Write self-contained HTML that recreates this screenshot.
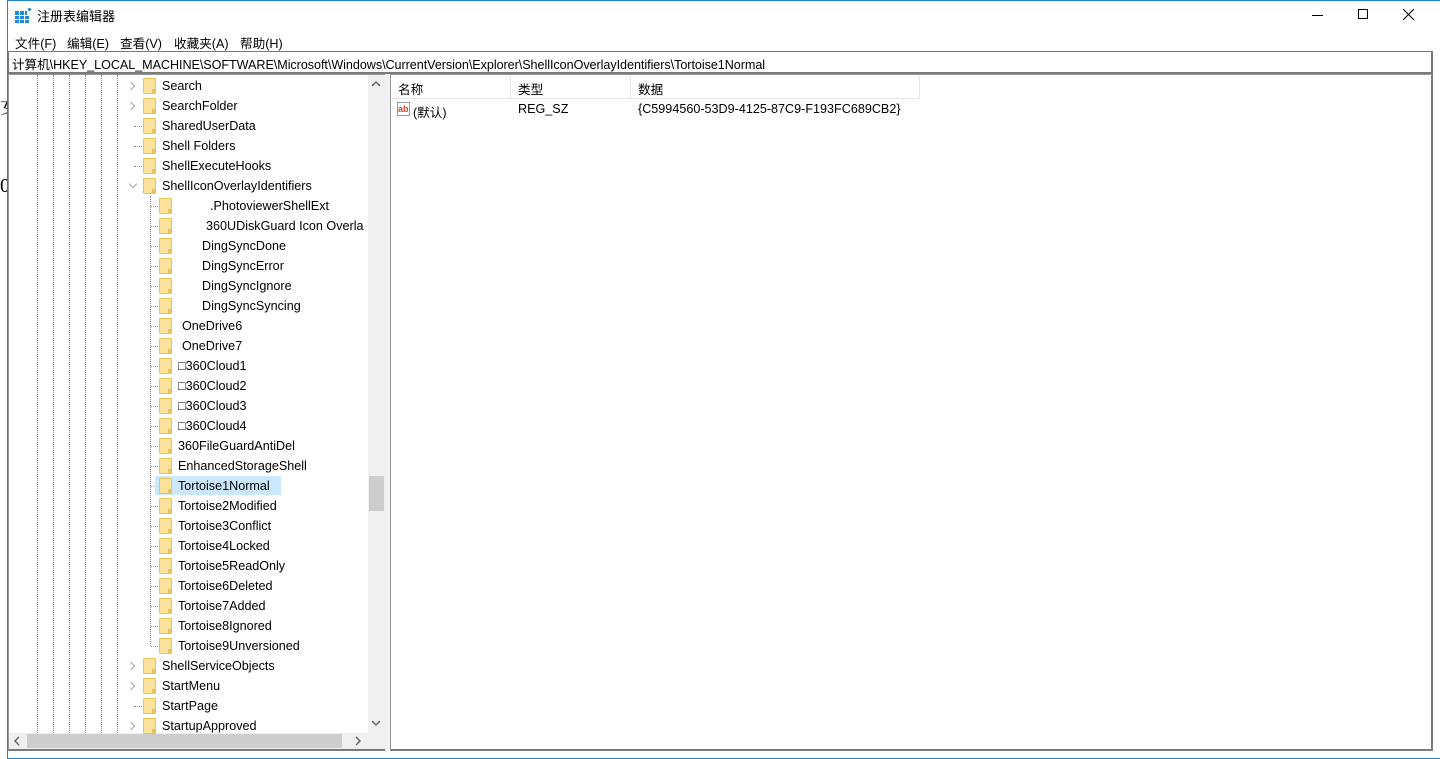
<!DOCTYPE html>
<html><head><meta charset="utf-8"><style>
*{margin:0;padding:0;box-sizing:border-box}
body{width:1440px;height:759px;background:#fff;position:relative;overflow:hidden;font-family:"Liberation Sans","Noto Sans CJK SC",sans-serif;font-size:12.6px;color:#000}
.a{position:absolute}
.win{left:7px;top:0;width:1433px;height:759px;border:1px solid #1883d7;border-right:none;background:#fff}
.row{position:absolute;height:20px;line-height:20px;white-space:nowrap}
.f{position:absolute;width:13px;height:16px;background:#fbe29a;border:1px solid #e8c35a;border-radius:1px}
.f:after{content:"";position:absolute;right:-1px;bottom:-1px;width:4px;height:5px;background:#e8c35a}
.vd{position:absolute;width:1px;border-left:1px dotted #888}
.hd{position:absolute;height:1px;border-top:1px dotted #888}
.ch{position:absolute;width:6px;height:6px;border-right:1.3px solid #a0a0a0;border-bottom:1.3px solid #a0a0a0}
</style></head><body>
<div class="a" style="left:0;top:90px;font-size:20px;font-family:'Liberation Serif','Noto Serif CJK SC',serif">女</div>
<div class="a" style="left:0;top:175px;font-size:20px;font-family:'Liberation Serif',serif">0(</div>
<div class="a win"></div>
<svg class="a" style="left:15px;top:8px" width="17" height="16" viewBox="0 0 17 16"><g fill="#1e8ad6"><rect x="0" y="3" width="4" height="4"/><rect x="5" y="3" width="4" height="4"/><rect x="10" y="3" width="2" height="4"/><rect x="0" y="8" width="4" height="3"/><rect x="5" y="8" width="4" height="3"/><rect x="10" y="8" width="4" height="3"/><rect x="0" y="12" width="4" height="3"/><rect x="5" y="12" width="4" height="3"/><rect x="10" y="12" width="4" height="3"/><rect x="13" y="0" width="3" height="3" transform="rotate(45 14.5 1.5)"/></g></svg>
<div class="a" style="left:37px;top:6px;font-size:13px">注册表编辑器</div>
<div class="a" style="left:1312px;top:15px;width:11px;height:1px;background:#000"></div>
<div class="a" style="left:1358px;top:9px;width:10px;height:10px;border:1px solid #000"></div>
<svg class="a" style="left:1403px;top:9px" width="11" height="11"><path d="M0 0L11 11M11 0L0 11" stroke="#000" stroke-width="1"/></svg>
<div class="a" style="left:15px;top:33px">文件(F)</div>
<div class="a" style="left:67px;top:33px">编辑(E)</div>
<div class="a" style="left:120px;top:33px">查看(V)</div>
<div class="a" style="left:174px;top:33px">收藏夹(A)</div>
<div class="a" style="left:240px;top:33px">帮助(H)</div>
<div class="a" style="left:8px;top:51px;width:1425px;height:23px;border:1px solid #7a7a7a;border-right:2px solid #7a7a7a;border-bottom:2px solid #7a7a7a;background:#fff"></div>
<div class="a" style="left:12px;top:54px;letter-spacing:-0.05px">计算机\HKEY_LOCAL_MACHINE\SOFTWARE\Microsoft\Windows\CurrentVersion\Explorer\ShellIconOverlayIdentifiers\Tortoise1Normal</div>
<div class="a" style="left:8px;top:74px;width:377px;height:677px;border-left:1px solid #999;border-bottom:2px solid #7a7a7a;background:#fff"></div>
<div class="a" style="left:385px;top:74px;width:5px;height:677px;background:#f0f0f0"></div>
<div class="a" style="left:390px;top:74px;width:1043px;height:677px;border-left:1px solid #999;border-right:2px solid #7a7a7a;border-bottom:2px solid #7a7a7a;border-top:1px solid #999"></div>
<div class="a" style="left:8px;top:74px;width:377px;height:1px;background:#999"></div>
<div class="a" style="left:368px;top:75px;width:17px;height:658px;background:#f0f0f0"></div>
<svg class="a" style="left:371px;top:80px" width="10" height="8"><path d="M1 6L5 2L9 6" stroke="#606060" stroke-width="1.4" fill="none"/></svg>
<svg class="a" style="left:371px;top:719px" width="10" height="8"><path d="M1 2L5 6L9 2" stroke="#606060" stroke-width="1.4" fill="none"/></svg>
<div class="a" style="left:369px;top:476px;width:15px;height:35px;background:#cdcdcd"></div>
<div class="a" style="left:9px;top:733px;width:376px;height:16px;background:#f0f0f0"></div>
<div class="a" style="left:27px;top:734px;width:315px;height:14px;background:#cdcdcd"></div>
<svg class="a" style="left:13px;top:736px" width="8" height="10"><path d="M6 1L2 5L6 9" stroke="#606060" stroke-width="1.4" fill="none"/></svg>
<svg class="a" style="left:354px;top:736px" width="8" height="10"><path d="M2 1L6 5L2 9" stroke="#606060" stroke-width="1.4" fill="none"/></svg>
<div class="vd" style="left:37px;top:75px;height:658px"></div>
<div class="vd" style="left:53px;top:75px;height:658px"></div>
<div class="vd" style="left:69px;top:75px;height:658px"></div>
<div class="vd" style="left:85px;top:75px;height:658px"></div>
<div class="vd" style="left:101px;top:75px;height:658px"></div>
<div class="vd" style="left:117px;top:75px;height:658px"></div>
<div class="vd" style="left:150px;top:196px;height:450px"></div>
<div id="tree"></div>
<div class="a" style="left:391px;top:75px;width:528px;height:24px;border-bottom:1px solid #e5e5e5"></div>
<div class="a" style="left:510px;top:76px;width:1px;height:22px;background:#e5e5e5"></div>
<div class="a" style="left:630px;top:76px;width:1px;height:22px;background:#e5e5e5"></div>
<div class="a" style="left:919px;top:76px;width:1px;height:22px;background:#e5e5e5"></div>
<div class="a" style="left:398px;top:79px">名称</div>
<div class="a" style="left:518px;top:79px">类型</div>
<div class="a" style="left:638px;top:79px">数据</div>
<svg class="a" style="left:396px;top:101px" width="16" height="16"><rect x="1.5" y="1.5" width="12" height="13" fill="#fff" stroke="#9a9a9a"/><text x="2" y="11" font-size="9" font-family="Liberation Sans" font-weight="bold" fill="#d9442c">ab</text></svg>
<div class="a" style="left:413px;top:102px">(默认)</div>
<div class="a" style="left:518px;top:102px">REG_SZ</div>
<div class="a" style="left:638px;top:102px">{C5994560-53D9-4125-87C9-F193FC689CB2}</div>
<script>
var rows=[
[0,'Search',1],[0,'SearchFolder',1],[0,'SharedUserData',0],[0,'Shell Folders',0],[0,'ShellExecuteHooks',0],[0,'ShellIconOverlayIdentifiers',2],
[1,'.PhotoviewerShellExt',0,210],[1,'360UDiskGuard Icon Overla',0,206],[1,'DingSyncDone',0,202],[1,'DingSyncError',0,202],[1,'DingSyncIgnore',0,202],[1,'DingSyncSyncing',0,202],
[1,'OneDrive6',0,182],[1,'OneDrive7',0,182],[1,'\u25a1360Cloud1'],[1,'\u25a1360Cloud2'],[1,'\u25a1360Cloud3'],[1,'\u25a1360Cloud4'],[1,'360FileGuardAntiDel'],[1,'EnhancedStorageShell'],[1,'Tortoise1Normal',0,0,1],
[1,'Tortoise2Modified'],[1,'Tortoise3Conflict'],[1,'Tortoise4Locked'],[1,'Tortoise5ReadOnly'],[1,'Tortoise6Deleted'],[1,'Tortoise7Added'],[1,'Tortoise8Ignored'],[1,'Tortoise9Unversioned'],
[0,'ShellServiceObjects',1],[0,'StartMenu',1],[0,'StartPage',0],[0,'StartupApproved',1]];
var h='';
rows.forEach(function(r,i){var y=75+i*20;var ty=y+1;var lv=r[0];
 if(lv==0){
  if(r[2]==1)h+='<div class="ch" style="left:128px;top:'+(y+8)+'px;transform:rotate(-45deg)"></div>';
  else if(r[2]==2)h+='<div class="ch" style="left:130px;top:'+(y+6)+'px;transform:rotate(45deg)"></div>';
  else h+='<div class="hd" style="left:134px;top:'+(y+11)+'px;width:8px"></div>';
  h+='<div class="f" style="left:143px;top:'+(y+3)+'px"></div>';
  h+='<div class="row" style="left:162px;top:'+ty+'px">'+r[1]+'</div>';
 }else{
  h+='<div class="hd" style="left:151px;top:'+(y+11)+'px;width:7px"></div>';
  if(r[4])h+='<div class="a" style="left:155px;top:'+(y+1)+'px;width:126px;height:19px;background:#cce8ff"></div>';
  h+='<div class="f" style="left:159px;top:'+(y+3)+'px"></div>';
  h+='<div class="row" style="left:'+(r[3]||178)+'px;top:'+ty+'px">'+r[1]+'</div>';
 }});
document.getElementById('tree').innerHTML=h;
</script>
</body></html>
